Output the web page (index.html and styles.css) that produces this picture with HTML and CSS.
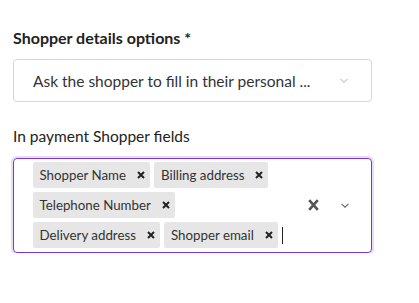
FILE: index.html
```html
<!DOCTYPE html>
<html>
<head>
<meta charset="utf-8" />
<title>Shopper fields</title>
<link rel="stylesheet" href="styles.css">
</head>
<body>
<div class="form">
	<div class="field">
		<div class="label label-strong">Shopper details options *</div>
		<div class="select">
			<span class="select-value">Ask the shopper to fill in their personal ...</span>
			<span class="chev chev-light">
				<svg width="8" height="5" viewBox="0 0 8 5"><path d="M0.5 0.8l3.5 3.4 3.5-3.4" fill="none" stroke="currentColor" stroke-width="1.1"/></svg>
			</span>
		</div>
	</div>
	<div class="field field-multi">
		<div class="label">In payment Shopper fields</div>
		<div class="multi">
			<div class="tags">
				<span class="tag">Shopper Name <i class="tag-x"><svg width="8" height="8" viewBox="0 0 8 8"><path d="M1 1l6 6M7 1l-6 6" stroke="currentColor" stroke-width="2"/></svg></i></span>
				<span class="tag">Billing address <i class="tag-x"><svg width="8" height="8" viewBox="0 0 8 8"><path d="M1 1l6 6M7 1l-6 6" stroke="currentColor" stroke-width="2"/></svg></i></span>
				<span class="tag">Telephone Number <i class="tag-x"><svg width="8" height="8" viewBox="0 0 8 8"><path d="M1 1l6 6M7 1l-6 6" stroke="currentColor" stroke-width="2"/></svg></i></span>
				<span class="tag">Delivery address <i class="tag-x"><svg width="8" height="8" viewBox="0 0 8 8"><path d="M1 1l6 6M7 1l-6 6" stroke="currentColor" stroke-width="2"/></svg></i></span>
				<span class="tag">Shopper email <i class="tag-x"><svg width="8" height="8" viewBox="0 0 8 8"><path d="M1 1l6 6M7 1l-6 6" stroke="currentColor" stroke-width="2"/></svg></i></span>
				<span class="caret"></span>
			</div>
			<div class="controls">
				<span class="clear">
					<svg width="11" height="12" viewBox="0 0 11 12"><path d="M1.2 1.2l8.6 9.6M9.8 1.2l-8.6 9.6" stroke="currentColor" stroke-width="2.6"/></svg>
				</span>
				<span class="chev">
					<svg width="8" height="5" viewBox="0 0 8 5"><path d="M0.5 0.8l3.5 3.4 3.5-3.4" fill="none" stroke="currentColor" stroke-width="1.1"/></svg>
				</span>
			</div>
		</div>
	</div>
</div>
</body>
</html>
```
FILE: styles.css
```css
*{margin:0;padding:0;box-sizing:border-box;}
body{background:#fff; font-family:Lato,"Noto Sans",sans-serif; color:#222;}
.form{width:359px; margin:28px 0 0 13px;}
.field-multi{margin-top:25px;}
.label{font-size:15.5px; line-height:19px; color:#222;}
.label-strong{font-weight:bold; font-size:16px; margin-bottom:12px;}
.field-multi .label{margin-bottom:12px;}
.select{height:43px; border:1px solid #d7d7db; border-radius:4px; display:flex; align-items:center; padding:0 23px 0 19px;}
.select-value{flex:1; font-size:15.5px; color:#333;}
.chev{width:8px; display:flex; color:#666;}
.chev-light{color:#c8c8cc;}
.multi{height:95px; border:1.5px solid #7e35d6; border-radius:4px; box-shadow:0 0 0 2px #e8dcf8; display:flex; align-items:center; justify-content:space-between; padding:2px 22.5px 2.5px 18.5px;}
.tags{display:flex; flex-wrap:wrap; align-items:center; gap:4px; width:252px;}
.tag{height:26px; display:flex; align-items:center; background:#e6e6e6; border-radius:2px; padding:0 5px 0 7px; font-size:13.3px; color:#333;}
.tag-x{display:flex; color:#222; margin-left:11px;}
.caret{width:1px; height:17px; background:#222;}
.controls{display:flex; align-items:center; gap:22px;}
.clear{display:flex; color:#555;}
```
